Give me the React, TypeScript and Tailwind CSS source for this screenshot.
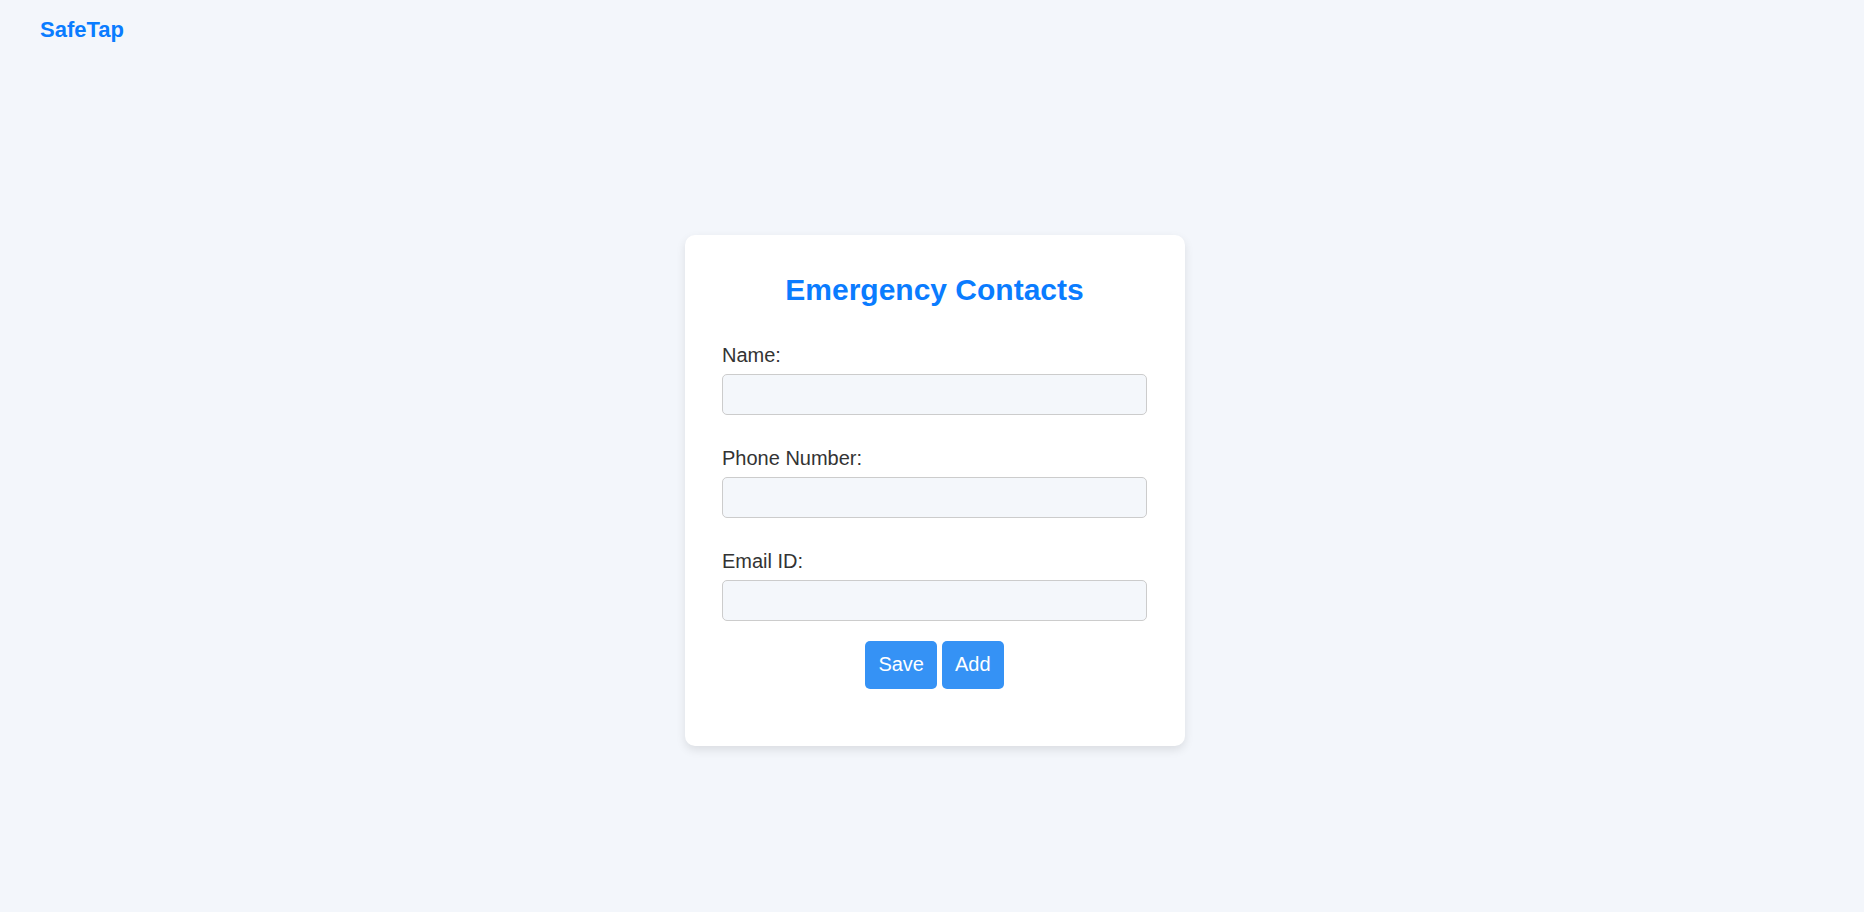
import React from 'react'

const fields = [
    { id: 'name', label: 'Name:', type: 'text' },
    { id: 'phone', label: 'Phone Number:', type: 'tel' },
    { id: 'email', label: 'Email ID:', type: 'email' },
]

function App() {
    return (
        <div className="flex h-screen flex-col bg-[#f3f6fb] font-['Liberation_Sans',Arial,sans-serif]">
            <header className="flex h-[68px] shrink-0 items-start pt-[17px] pl-[40px]">
                <div className="text-[22px] font-bold leading-[26px] text-[#0a7cff]">
                    SafeTap
                </div>
            </header>
            <main className="flex flex-1 items-center justify-center pl-[6px]">
                <div className="w-[500px] rounded-[10px] bg-white pt-[38px] pr-[38px] pb-[57px] pl-[37px] shadow-[0_4px_10px_rgba(0,0,0,0.1)]">
                    <h2 className="mb-[37px] text-center text-[30px] font-bold leading-[34px] text-[#0a7cff]">
                        Emergency Contacts
                    </h2>
                    <form className="flex flex-col">
                        {fields.map((f, i) => (
                            <div
                                key={f.id}
                                className={i < fields.length - 1 ? 'mb-[32px]' : 'mb-[20px]'}
                            >
                                <label
                                    htmlFor={f.id}
                                    className="mb-[8px] block text-[20px] leading-[22px] text-[#333333]"
                                >
                                    {f.label}
                                </label>
                                <input
                                    id={f.id}
                                    type={f.type}
                                    className="block h-[41px] w-full rounded-[5px] border border-[#cccccc] bg-[#f4f7fb] px-2 outline-none"
                                />
                            </div>
                        ))}
                        <div className="flex justify-center gap-[5px]">
                            <button
                                type="button"
                                className="h-[48px] rounded-[5px] bg-[#3592f5] px-[13px] text-[20px] leading-[23px] text-white"
                            >
                                Save
                            </button>
                            <button
                                type="button"
                                className="h-[48px] rounded-[5px] bg-[#3592f5] px-[13px] text-[20px] leading-[23px] text-white"
                            >
                                Add
                            </button>
                        </div>
                    </form>
                </div>
            </main>
        </div>
    )
}

export default App
